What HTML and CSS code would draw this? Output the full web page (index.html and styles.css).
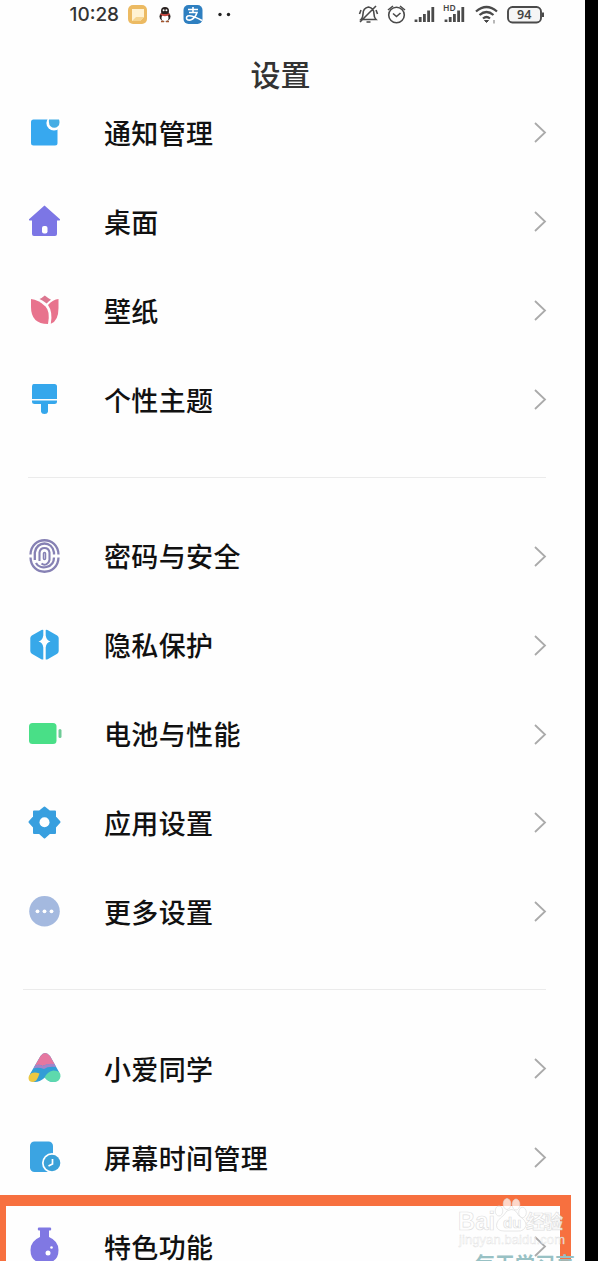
FILE: index.html
```
<!DOCTYPE html>
<html lang="zh-CN">
<head>
<meta charset="utf-8">
<title>设置</title>
<link rel="stylesheet" href="styles.css">
</head>
<body>
<div class="screen">
  <header class="status">
    <span class="clock">10:28</span>
    <svg class="apps" width="110" height="30" viewBox="0 0 110 30">
      <rect x="3" y="5" width="19" height="19" rx="5" fill="#ecba62"/><path d="M7 9h12v8l-4 4H7z" fill="#fff2d2"/><path d="M7 21l4-4h8v0l-4 4z" fill="#f5d592"/>
      <ellipse cx="40" cy="16.500" rx="5.500" ry="5" fill="#28201f"/><circle cx="40" cy="11" r="4" fill="#28201f"/><ellipse cx="40" cy="18" rx="3.500" ry="3.400" fill="#fff"/><path d="M35.500 14q4.500 2.500 9 0" stroke="#c8453d" stroke-width="1.800" fill="none"/><circle cx="38.600" cy="10.300" r="1" fill="#fff"/><circle cx="41.400" cy="10.300" r="1" fill="#fff"/><path d="M36 21.500h3m2 0h3" stroke="#a3552c" stroke-width="1.500"/>
      <rect x="58.500" y="5" width="19" height="19" rx="5" fill="#2e7fc0"/><path d="M63 9.500h10M68 7v5.500M64 12.500h8q-2 6-6.500 7.500-4 .5-4-2 0-3 5-2 4 1 10.500 4.500" stroke="#fff" stroke-width="1.600" fill="none"/>
      <circle cx="95" cy="14.500" r="1.700" fill="#222"/><circle cx="103.500" cy="14.500" r="1.700" fill="#222"/>
    </svg>
    <svg class="signals" width="200" height="30" viewBox="0 0 200 30" fill="none" stroke="#4a4a4a" stroke-width="1.600">
      <path d="M11 19.500q2-2 2-5.500 0-6 5.500-7 5.500 1 5.500 7 0 3.500 2 5.500zM16.500 22h4M26 6L10 22M11 10l-1.500 4M26 10l1.500 4"/>
      <circle cx="46.500" cy="15" r="7.800"/><path d="M43 13.500l3.500 3 4-3.500M38 10l5-4M50 6l5 4"/>
      <g stroke-width="2.800"><path d="M66 22v-2.500M70.200 22v-5M74.400 22v-8M78.600 22V10.500M82.800 22V7M96 22v-2.500M100.200 22v-5M104.400 22v-8M108.600 22V10.500M112.800 22V7"/></g>
      <path d="M126 11.500q10.500-9 21 0M129.500 15q7-6 14 0M133 18.500q3.500-3 7 0" stroke-width="2.300"/><path d="M134.500 20.500h4l-2 2z" fill="#4a4a4a" stroke-width="1"/><path d="M144 20v3.500" stroke="#888" stroke-width="1.200"/>
      <rect x="158" y="7" width="33" height="15.500" rx="4.500" fill="#f5f5f5" stroke-width="1.900"/><path d="M193 12.500v4.500" stroke-width="2"/>
      <text class="hd" x="93" y="11">HD</text><text class="level" x="174.200" y="19.200">94</text>
    </svg>
  </header>
  <h1 class="title">设置</h1>

  <ul class="group">
    <li class="row"><svg class="icon" viewBox="0 0 40 40"><rect x="7" y="7.500" width="26.500" height="26" rx="2.500" fill="#37a8ef"/><circle cx="30" cy="11" r="7.600" fill="#fff"/><path d="M25 7.500h10q.5 1 .5 3a5.200 5.200 0 0 1-10.500 0q-.3-1.500 0-3z" fill="#45ade4"/></svg><span class="label">通知管理</span><svg class="arrow" viewBox="0 0 14 24"><path d="M2 3l10 9.500L2 22"/></svg></li>
    <li class="row"><svg class="icon" viewBox="0 0 40 40"><path d="M20.500 4.500L36 18.300q.6 1.200-1 1.200h-2V33q0 2-2 2H10q-2 0-2-2V19.500H6q-1.600 0-1-1.200z" fill="#7c76e5"/><rect x="18" y="25" width="5.500" height="7.500" rx="2" fill="#fff"/></svg><span class="label">桌面</span><svg class="arrow" viewBox="0 0 14 24"><path d="M2 3l10 9.500L2 22"/></svg></li>
    <li class="row"><svg class="icon" viewBox="0 0 40 40"><path d="M7 9Q14.500 9.500 21.500 16.500q5 5 2.500 17.500Q7 34 7 17z" fill="#e8738d"/><path d="M34.500 9Q29 9.500 24 15q5 7 2.800 18.800Q34.500 31 34.500 18z" fill="#e8738d"/><path d="M15.500 9q3 1 7.200 4.500 1.800-2 4.300-3.800Q24.500 8.500 20.800 5.500 18 8 15.500 9" fill="#dc7790"/></svg><span class="label">壁纸</span><svg class="arrow" viewBox="0 0 14 24"><path d="M2 3l10 9.500L2 22"/></svg></li>
    <li class="row"><svg class="icon" viewBox="0 0 40 40"><path d="M9.500 5h21q2.500 0 2.500 2.500v12.500H8V7.500Q8 5 9.500 5M8 21.500h25V23q0 2-2.500 2H24v7.500q-.5 2.500-3.500 2.500T17 32.500V25h-6.500Q8 25 8 23z" fill="#35a7ec"/></svg><span class="label">个性主题</span><svg class="arrow" viewBox="0 0 14 24"><path d="M2 3l10 9.500L2 22"/></svg></li>
  </ul>
  <hr class="divider">
  <ul class="group">
    <li class="row"><svg class="icon" viewBox="0 0 40 40" fill="none" stroke="#8681b4" stroke-width="2.300"><path d="M6.500 18.500C7 -.5 34 -.5 34.500 18.500M6.500 21.500C7 40.500 34 40.500 34.500 21.500M10.800 24V16.500C12.500 4.500 28.500 4.500 30 16.500v2M12 27C16 34.500 30 32 30 21.500"/><path d="M15.500 25v-8.500c1-6 9-6 10 0v7.500c-1 4.500-5 6-8 3.500" stroke-width="2.100"/><rect x="19.500" y="16.500" width="2" height="7" rx="1" stroke-width="1.500"/></svg><span class="label">密码与安全</span><svg class="arrow" viewBox="0 0 14 24"><path d="M2 3l10 9.500L2 22"/></svg></li>
    <li class="row"><svg class="icon" viewBox="0 0 40 40"><path d="M19.300 5v5.500Q18.500 15.500 14.500 16.500q4.300 1.200 4.800 6V34.500q-1 .3-2-.3l-9.500-5.500Q6.300 27.800 6.300 26V13q0-1.500 1.500-2.500L17.500 5q1-.6 1.800 0M21.700 5v5.500q.8 5 4.800 6-4.300 1.200-4.800 6V34.500q1 .3 2-.3l9.500-5.500q1.500-.9 1.500-2.700V13q0-1.500-1.500-2.500L23.500 5q-1-.6-1.800 0" fill="#37a8e9"/></svg><span class="label">隐私保护</span><svg class="arrow" viewBox="0 0 14 24"><path d="M2 3l10 9.500L2 22"/></svg></li>
    <li class="row"><svg class="icon" viewBox="0 0 40 40"><rect x="5" y="9" width="27.500" height="21" rx="3.500" fill="#49df87"/><rect x="34.500" y="15" width="3" height="9" rx="1.500" fill="#6ecb96"/></svg><span class="label">电池与性能</span><svg class="arrow" viewBox="0 0 14 24"><path d="M2 3l10 9.500L2 22"/></svg></li>
    <li class="row"><svg class="icon" viewBox="0 0 40 40"><path d="M20.500 5.500l5 4H31v5.500l4.500 5-4.500 5V31h-5.500l-5 4.500-5-4.500H10v-6l-4.500-5 4.500-5V9.500h5.500z" fill="#389fdf" stroke="#389fdf" stroke-width="2" stroke-linejoin="round"/><circle cx="20.500" cy="20.300" r="5" fill="#fff"/></svg><span class="label">应用设置</span><svg class="arrow" viewBox="0 0 14 24"><path d="M2 3l10 9.500L2 22"/></svg></li>
    <li class="row"><svg class="icon" viewBox="0 0 40 40"><circle cx="20.500" cy="20.300" r="15.300" fill="#a4b9df"/><g fill="#fff"><circle cx="13.500" cy="20.300" r="1.900"/><circle cx="20.500" cy="20.300" r="1.900"/><circle cx="27.500" cy="20.300" r="1.900"/></g></svg><span class="label">更多设置</span><svg class="arrow" viewBox="0 0 14 24"><path d="M2 3l10 9.500L2 22"/></svg></li>
  </ul>
  <hr class="divider second">
  <ul class="group">
    <li class="row"><svg class="icon" viewBox="0 0 40 40"><path d="M16.500 8q4.500-6 9.500 0l9 16q3 9-6 10-4.500 0-8-4.500-6 5-11 4.500-6-2-4-8z" fill="#329dd6"/><path d="M16.500 8q4.500-6 9.500 0l4.500 8q-9 0-12 2-3-2-7.500-.5z" fill="#e577a0"/><path d="M11 17.500q4.500-1.500 7.500.5 5-3 12-2l1.500 3q-8-1-12 2-6-2-10.500-.5z" fill="#a185ca"/><path d="M20.500 29.500q3-6 9-7 7.500 0 7 6-1 5.500-7 5.500-5.500 0-9-4.500" fill="#5ed9ad"/><path d="M5.500 27q3-4 10-1.500-2 6-4 7.500-3 2-6 0-2-3 0-6" fill="#ecc842"/></svg><span class="label">小爱同学</span><svg class="arrow" viewBox="0 0 14 24"><path d="M2 3l10 9.500L2 22"/></svg></li>
    <li class="row"><svg class="icon" viewBox="0 0 40 40"><rect x="6" y="4.500" width="23" height="30.500" rx="4.500" fill="#3ba4e2"/><circle cx="28" cy="26" r="10" fill="#fff"/><circle cx="28" cy="26" r="8.300" fill="#3ba1d8"/><path d="M28.500 22v5l-4 2" fill="none" stroke="#fff" stroke-width="1.700"/></svg><span class="label">屏幕时间管理</span><svg class="arrow" viewBox="0 0 14 24"><path d="M2 3l10 9.500L2 22"/></svg></li>
    <li class="row"><svg class="icon" viewBox="0 0 40 40"><path d="M14.500 1.500h12q1.500 1.500 0 3H25V11q9.500 4 9.500 13 0 13-14 13T6.500 24q0-9 9.500-13V4.500h-1.500q-1.500-1.500 0-3" fill="#8078e3"/><circle cx="24" cy="27" r="2.500" fill="#fff"/><circle cx="27.500" cy="21.500" r="1.300" fill="#fff"/></svg><span class="label">特色功能</span><svg class="arrow" viewBox="0 0 14 24"><path d="M2 3l10 9.500L2 22"/></svg></li>
  </ul>

  <div class="highlight"></div>
  <div class="caption">每天学习享</div>
  <svg class="watermark" width="140" height="64" viewBox="0 0 140 64">
    <g fill="#fff" fill-opacity=".72" stroke="#d8d8d8" stroke-opacity=".6"><ellipse cx="57" cy="12" rx="3.800" ry="5.500"/><ellipse cx="66" cy="12.500" rx="3.800" ry="5.500"/><ellipse cx="49" cy="19" rx="3.800" ry="5"/><ellipse cx="72.500" cy="20.500" rx="3.800" ry="5.200"/><path d="M61 17.500q5 0 7.500 6 8 5 7.500 10-2 6-8 5.500H54q-7 0-7.500-5.500 0-5 7-10 3-6 7.500-6"/></g>
    <text class="wm-main" x="8" y="38" textLength="37" lengthAdjust="spacingAndGlyphs">Bai</text><text class="wm-du" x="53" y="36">du</text><text class="wm-cn" x="76" y="37" textLength="37">经验</text><text class="wm-url" x="9" y="52" textLength="106">jingyan.baidu.com</text>
  </svg>
</div>
</body>
</html>
```
FILE: styles.css
```
* { box-sizing: border-box; }
body { margin: 0; background: #000; overflow: hidden; font-family: "Noto Sans CJK SC", sans-serif; }
.screen { position: relative; width: 585px; height: 1261px; overflow: hidden; background: #fefefe; }
.status { display: flex; height: 30px; padding-left: 69px; align-items: center; }
.clock { width: 56px; color: #333; font: 500 19px/30px Inter, sans-serif; text-indent: .5px; white-space: nowrap; }
.apps { flex: none; }
.signals { flex: none; margin-left: 115px; overflow: visible; }
.signals text { fill: #444; stroke: none; font-family: "Noto Sans", sans-serif; font-weight: 600; }
.signals .hd { font-size: 8.5px; }
.signals .level { font-size: 12.5px; text-anchor: middle; }
.title { height: 58px; margin: 0; padding-right: 24px; color: #333; font-size: 30px; font-weight: 500; line-height: 86px; text-align: center; }
.group { margin: 0; padding: 0; list-style: none; }
.row { display: flex; height: 88.9px; padding: 0 38px 0 24px; align-items: center; }
.icon { flex: none; width: 40px; height: 40px; }
.label { flex: 1; margin-left: 40px; color: #111; font-size: 27px; font-weight: 500; letter-spacing: .35px; line-height: 40px; padding-top: 1px; }
.arrow { flex: none; width: 14px; height: 24px; fill: none; stroke: #aaa; stroke-width: 1.8; }
.divider { height: 1px; margin: 33.2px 39px 33.6px 28px; border: 0; background: #ebebeb; }
.second { margin: 33px 39px 34px 23px; }
.highlight { position: absolute; top: 1195px; left: -5px; width: 576px; height: 90px; border: 11px solid #f7703f; }
.caption { position: absolute; top: 1250px; left: 475px; color: #98c1c4; font-size: 20px; font-weight: 700; line-height: 28px; white-space: nowrap; }
.watermark { position: absolute; top: 1192px; left: 450px; }
.watermark text { font-family: "Liberation Sans", "Noto Sans CJK SC", sans-serif; fill: #fff; fill-opacity: .75; stroke: #d4d4d4; stroke-width: .7; stroke-opacity: .75; }
.watermark .wm-main { font-size: 26px; font-weight: 700; }
.watermark .wm-du { font-size: 15px; font-weight: 700; }
.watermark .wm-cn { font-size: 19px; font-weight: 700; }
.watermark .wm-url { font-size: 13px; stroke-width: .4; }
```
